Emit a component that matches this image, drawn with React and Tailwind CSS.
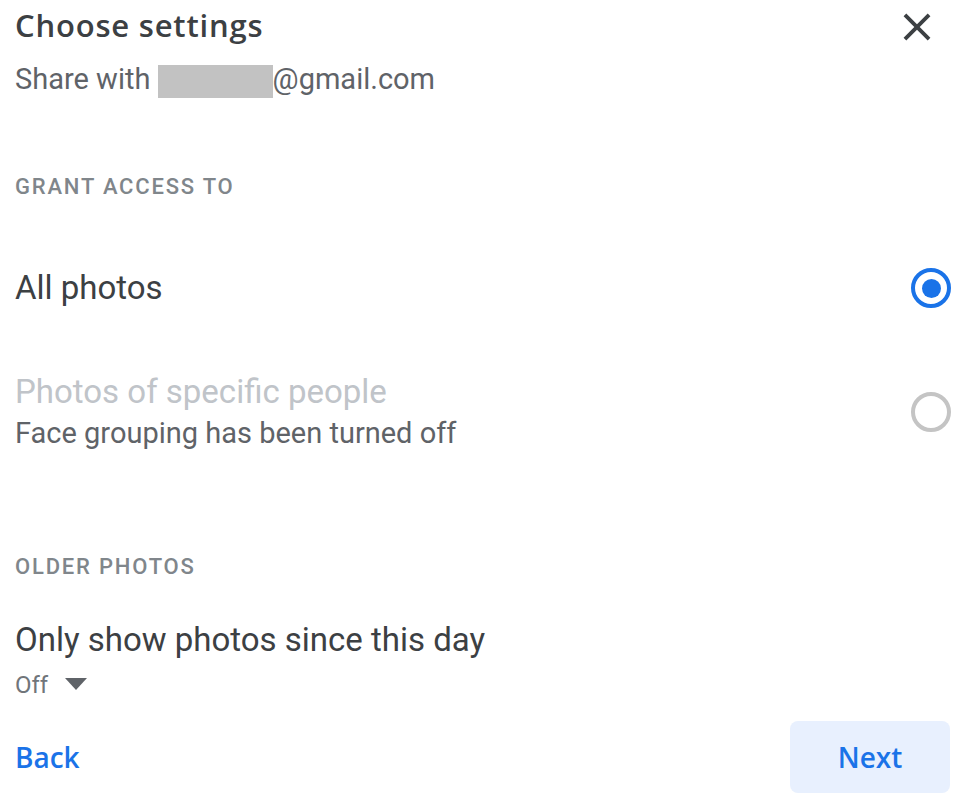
export default function App() {
  const gs = { fontFamily: '"Open Sans", "Liberation Sans", sans-serif' };
  return (
    <div
      className="w-[960px] h-[803px] bg-white pl-[15px] pr-[9px] flex flex-col overflow-hidden"
      style={{ fontFamily: 'Roboto, "Liberation Sans", sans-serif' }}
    >
      <div className="flex justify-between items-start h-[47px]">
        <div
          className="mt-[3px] text-[31px] leading-[44px] font-semibold text-[#3c4043] tracking-[0.8px]"
          style={gs}
        >
          Choose settings
        </div>
        <svg
          className="mt-[4px] mr-[11px] shrink-0"
          width="46"
          height="46"
          viewBox="0 0 24 24"
          fill="#3c4043"
        >
          <path d="M19 6.41L17.59 5 12 10.59 6.41 5 5 6.41 10.59 12 5 17.59 6.41 19 12 13.41 17.59 19 19 17.59 13.41 12z" />
        </svg>
      </div>

      <div className="mt-[14px] text-[29px] leading-[36px] text-[#5f6368]">
        Share with{' '}
        <span className="inline-block w-[115px] h-[33px] bg-[#c2c2c2] align-[-9px]"></span>
        @gmail.com
      </div>

      <div className="mt-[75px] text-[22px] leading-[28px] font-medium tracking-[1.8px] text-[#80868b]">
        GRANT ACCESS TO
      </div>

      <div className="mt-[67px] flex items-center justify-between h-[40px]">
        <div className="text-[33px] leading-[40px] text-[#3c4043]">All photos</div>
        <div className="w-[40px] h-[40px] rounded-full border-[4px] border-[#1a73e8] flex items-center justify-center">
          <div className="w-[19px] h-[19px] rounded-full bg-[#1a73e8]"></div>
        </div>
      </div>

      <div className="mt-[64px] flex items-center justify-between">
        <div className="flex flex-col">
          <div className="text-[33px] leading-[40px] text-[#c0c4c9]">Photos of specific people</div>
          <div className="mt-[3px] text-[29px] leading-[36px] text-[#5f6368]">
            Face grouping has been turned off
          </div>
        </div>
        <div className="w-[40px] h-[40px] rounded-full border-[4px] border-[#c4c4c4]"></div>
      </div>

      <div className="mt-[102px] text-[22px] leading-[28px] font-medium tracking-[1.8px] text-[#80868b]">
        OLDER PHOTOS
      </div>

      <div className="mt-[39px] text-[33px] leading-[40px] text-[#3c4043]">
        Only show photos since this day
      </div>

      <div className="mt-[11px] flex items-center h-[28px]">
        <span className="text-[24px] leading-[28px] text-[#70757a]">Off</span>
        <svg className="ml-[17px] -mt-[3px]" width="22" height="12" viewBox="0 0 22 12">
          <path d="M0 0 L22 0 L11 12 Z" fill="#5f6368" />
        </svg>
      </div>

      <div className="mt-[22px] flex items-center justify-between">
        <div className="text-[28px] leading-[36px] font-semibold text-[#1a73e8]" style={gs}>
          Back
        </div>
        <div
          className="mr-[1px] w-[160px] h-[72px] rounded-[8px] bg-[#e8f0fe] flex items-center justify-center text-[28px] leading-[36px] font-semibold text-[#1a73e8]"
          style={gs}
        >
          Next
        </div>
      </div>
    </div>
  );
}
